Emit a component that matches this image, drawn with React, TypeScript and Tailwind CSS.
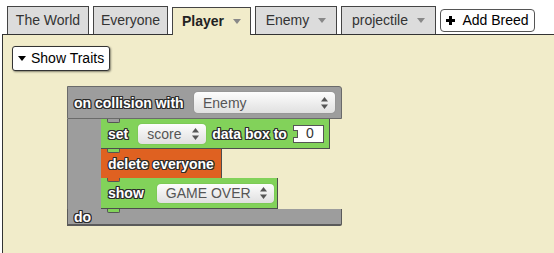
import React from "react";

const outline =
  "text-white font-bold text-[14px] leading-none [text-shadow:-1px_-1px_0_#2b2b2b,1px_-1px_0_#2b2b2b,-1px_1px_0_#2b2b2b,1px_1px_0_#2b2b2b,0_1px_0_#2b2b2b,0_-1px_0_#2b2b2b,1px_0_0_#2b2b2b,-1px_0_0_#2b2b2b]";

function Caret({ color = "#888" }: { color?: string }) {
  return (
    <svg width="8" height="5" viewBox="0 0 8 5" className="shrink-0">
      <path d="M0 0 L8 0 L4 5 Z" fill={color} />
    </svg>
  );
}

function UpDown() {
  return (
    <svg width="7" height="12" viewBox="0 0 7 12" className="shrink-0">
      <path d="M3.5 0 L7 4.5 L0 4.5 Z" fill="#555" />
      <path d="M0 7.5 L7 7.5 L3.5 12 Z" fill="#555" />
    </svg>
  );
}

function Dropdown({ label, w, h }: { label: string; w: string; h: string }) {
  return (
    <div
      className={`${w} ${h} flex items-center justify-between pl-[9px] pr-[7px] rounded-[4px] bg-linear-to-b from-[#fdfdfd] to-[#e0e0e0] text-[#555] text-[14px] leading-none shadow-[0_0_1px_rgba(0,0,0,0.35)]`}
    >
      <span>{label}</span>
      <UpDown />
    </div>
  );
}

function Notch({ color }: { color: string }) {
  return <div className={`absolute top-0 left-[6px] w-[13px] h-[4px] rounded-b-[2px] border-x border-b border-[#555] ${color}`} />;
}

type Tab = { label: string; w: string; caret?: boolean; active?: boolean };

const tabs: Tab[] = [
  { label: "The World", w: "w-[82px]" },
  { label: "Everyone", w: "w-[75px]" },
  { label: "Player", w: "w-[79px]", caret: true, active: true },
  { label: "Enemy", w: "w-[82px]", caret: true },
  { label: "projectile", w: "w-[95px]", caret: true },
];

export default function App() {
  return (
    <div className="w-[554px] h-[253px] bg-white overflow-hidden flex flex-col font-['Liberation_Sans',Arial,sans-serif]">
      <div className="h-[34px] flex items-end pl-[7px] gap-[4px] shrink-0">
        {tabs.map((t) =>
          t.active ? (
            <div
              key={t.label}
              className={`${t.w} h-[28px] mb-[-1px] relative z-10 flex items-center justify-center gap-[9px] border border-b-0 border-[#444] bg-[#f1ecca] text-[14px] font-bold text-[#222]`}
            >
              <span>{t.label}</span>
              <Caret />
            </div>
          ) : (
            <div
              key={t.label}
              className={`${t.w} h-[28px] flex items-center justify-center gap-[9px] border border-b-0 border-[#444] bg-[#dcdcdc] text-[14px] text-[#333]`}
            >
              <span>{t.label}</span>
              {t.caret && <Caret />}
            </div>
          )
        )}
        <button className="w-[95px] h-[23px] mb-[2px] flex items-center justify-center gap-[7px] bg-white border border-[#555] rounded-[4px] text-[14px] text-black">
          <svg width="9" height="9" viewBox="0 0 9 9">
            <rect x="3" y="0" width="3" height="9" fill="#000" />
            <rect x="0" y="3" width="9" height="3" fill="#000" />
          </svg>
          <span>Add Breed</span>
        </button>
      </div>

      <div className="flex-1 ml-[2px] border-l border-t border-[#333] bg-[#f1ecca] pl-[9px] pt-[11px]">
        <button className="w-[98px] h-[25px] flex items-center gap-[5px] pl-[5px] bg-white border border-[#333] rounded-[3px] shadow-[1px_1px_2px_rgba(0,0,0,0.45)] text-[14px] text-black">
          <Caret color="#000" />
          <span>Show Traits</span>
        </button>

        <div className="ml-[55px] mt-[15px] w-[275px] flex flex-col">
          <div className="h-[33px] flex items-center justify-between pl-[6px] pr-[6px] bg-[#9d9d9d] border border-[#6a6a6a] rounded-tr-[3px]">
            <span className={outline}>on collision with</span>
            <Dropdown label="Enemy" w="w-[141px]" h="h-[21px]" />
          </div>

          <div className="flex">
            <div className="w-[34px] bg-[#9d9d9d] border-l border-[#6a6a6a]" />
            <div className="flex flex-col items-start">
              <div className="relative w-[229px] h-[30px] flex items-center pl-[7px] bg-[#82d25a] border-r border-b border-[#4d4d4d]">
                <Notch color="bg-[#9d9d9d]" />
                <span className={outline}>set</span>
                <div className="ml-[10px]">
                  <Dropdown label="score" w="w-[68px]" h="h-[20px]" />
                </div>
                <span className={`${outline} ml-[6px]`}>data box to</span>
                <div className="relative ml-[6px] w-[31px] h-[18px] bg-white border border-[#555] flex items-center justify-end pr-[9px] text-[14px] text-[#333]">
                  <div className="absolute left-[-1px] top-[4px] w-[5px] h-[8px] bg-[#82d25a] border-y border-r border-[#555]" />
                  0
                </div>
              </div>
              <div className="relative w-[121px] h-[29px] flex items-center pl-[7px] bg-[#df6121] border-r border-[#4d4d4d]">
                <Notch color="bg-[#82d25a]" />
                <span className={outline}>delete everyone</span>
              </div>
              <div className="relative w-[177px] h-[31px] flex items-center pl-[7px] bg-[#82d25a] border-r border-b border-[#4d4d4d]">
                <Notch color="bg-[#df6121]" />
                <span className={outline}>show</span>
                <div className="ml-[13px]">
                  <Dropdown label="GAME OVER" w="w-[117px]" h="h-[19px]" />
                </div>
                <div className="absolute bottom-[-5px] left-[6px] w-[13px] h-[4px] rounded-b-[2px] border-x border-b border-[#555] bg-[#82d25a] z-10" />
              </div>
            </div>
          </div>

          <div className="h-[17px] flex items-center pl-[6px] bg-[#9d9d9d] border border-t-0 border-[#5a5a5a] border-b-2 rounded-br-[2px]">
            <span className={outline}>do</span>
          </div>
        </div>
      </div>
    </div>
  );
}
